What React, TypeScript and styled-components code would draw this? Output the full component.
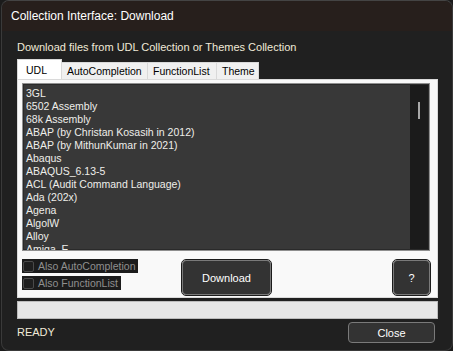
import React from "react";
import styled, { createGlobalStyle } from "styled-components";

const GlobalStyle = createGlobalStyle`
  html, body {
    margin: 0;
    padding: 0;
    background: #1b1b1b;
    font-family: "Liberation Sans", Arial, sans-serif;
  }
`;

const items = [
  "3GL",
  "6502 Assembly",
  "68k Assembly",
  "ABAP (by Christan Kosasih in 2012)",
  "ABAP (by MithunKumar in 2021)",
  "Abaqus",
  "ABAQUS_6.13-5",
  "ACL (Audit Command Language)",
  "Ada (202x)",
  "Agena",
  "AlgolW",
  "Alloy",
  "Amiga_E",
];

const tabs = [
  { label: "UDL", width: 45 },
  { label: "AutoCompletion", width: 87 },
  { label: "FunctionList", width: 70 },
  { label: "Theme", width: 43 },
];

function App() {
  return (
    <>
      <GlobalStyle />
      <Window>
        <TitleBar>Collection Interface: Download</TitleBar>
        <Body>
          <Description>Download files from UDL Collection or Themes Collection</Description>
          <TabRow>
            {tabs.map((t, i) => (
              <Tab key={t.label} active={i === 0} width={t.width}>
                {t.label}
              </Tab>
            ))}
          </TabRow>
          <Panel>
            <ListBox>
              <ListItems>
                {items.map((it) => (
                  <ListItem key={it}>{it}</ListItem>
                ))}
              </ListItems>
              <ScrollTrack>
                <ScrollThumb />
              </ScrollTrack>
            </ListBox>
            <Controls>
              <CheckColumn>
                <CheckRow>
                  <CheckBox />
                  Also AutoCompletion
                </CheckRow>
                <CheckRow>
                  <CheckBox />
                  Also FunctionList
                </CheckRow>
              </CheckColumn>
              <DarkButton width={89}>Download</DarkButton>
              <DarkButton width={37}>?</DarkButton>
            </Controls>
          </Panel>
          <Progress />
          <Footer>
            <Status>READY</Status>
            <CloseButton>Close</CloseButton>
          </Footer>
        </Body>
      </Window>
    </>
  );
}

const Window = styled.div`
  width: 450px;
  height: 349px;
  margin-left: 1px;
  border: 1px solid #3a3a3a;
  border-top-color: #444;
  border-radius: 8px;
  overflow: hidden;
  background: #202020;
  display: flex;
  flex-direction: column;
`;

const TitleBar = styled.div`
  height: 30px;
  flex: none;
  background: #271f1c;
  color: #ffffff;
  font-family: "Liberation Sans", Arial, sans-serif;
  font-size: 12px;
  display: flex;
  align-items: center;
  padding-left: 9px;
`;

const Body = styled.div`
  flex: 1;
  display: flex;
  flex-direction: column;
  padding: 0 15px 0 15px;
`;

const Description = styled.div`
  margin-top: 9px;
  height: 14px;
  line-height: 14px;
  color: #f0ead8;
  font-size: 11px;
`;

const TabRow = styled.div`
  margin-top: 5px;
  height: 20px;
  display: flex;
  align-items: flex-end;
`;

const Tab = styled.div<{ active?: boolean; width: number }>`
  width: ${({ width }) => width}px;
  height: ${({ active }) => (active ? 20 : 17)}px;
  padding-left: ${({ active }) => (active ? 8 : 5)}px;
  padding-top: ${({ active }) => (active ? 4 : 0)}px;
  background: ${({ active }) => (active ? "#ffffff" : "#f0f0f0")};
  border: 1px solid #d9d9d9;
  border-bottom: none;
  margin-left: -1px;
  box-sizing: border-box;
  color: #000;
  font-size: 10.5px;
  display: flex;
  align-items: ${({ active }) => (active ? "flex-start" : "center")};
  &:first-child {
    margin-left: 0;
  }
`;

const Panel = styled.div`
  width: 421px;
  height: 219px;
  background: #f9f9f9;
  border: 1px solid #dadada;
  box-sizing: border-box;
  padding: 3px 7px 0 4px;
  display: flex;
  flex-direction: column;
`;

const ListBox = styled.div`
  height: 168px;
  background: #383838;
  border: 1px solid #8f8f8f;
  box-shadow: inset 0 0 0 1px #2a2a2a;
  box-sizing: border-box;
  display: flex;
  overflow: hidden;
`;

const ListItems = styled.div`
  flex: 1;
  padding: 3px 0 0 3px;
`;

const ListItem = styled.div`
  height: 13px;
  line-height: 13px;
  color: #eeeeea;
  font-size: 10.5px;
  white-space: nowrap;
`;

const ScrollTrack = styled.div`
  width: 18px;
  background: #1b1b1b;
  margin: 1px 1px 1px 0;
  position: relative;
`;

const ScrollThumb = styled.div`
  position: absolute;
  left: 8px;
  top: 17px;
  width: 2px;
  height: 17px;
  background: #a8a8a8;
`;

const Controls = styled.div`
  margin-top: 9px;
  display: flex;
  align-items: flex-start;
`;

const CheckColumn = styled.div`
  width: 160px;
  margin-top: -1px;
  display: flex;
  flex-direction: column;
  gap: 3px;
`;

const CheckRow = styled.div`
  align-self: flex-start;
  height: 14px;
  line-height: 14px;
  background: #1c1c1c;
  color: #8f8f8f;
  font-size: 10.5px;
  display: flex;
  align-items: center;
  gap: 4px;
  padding-right: 3px;
`;

const CheckBox = styled.span`
  width: 11px;
  height: 11px;
  margin-left: 1px;
  border: 1px solid #4a4a4a;
  border-radius: 2px;
  background: #1f1f1f;
  box-sizing: border-box;
`;

const DarkButton = styled.button<{ width: number }>`
  width: ${({ width }) => width}px;
  height: 35px;
  background: #333333;
  color: #ffffff;
  font-family: "Liberation Sans", Arial, sans-serif;
  font-size: 11px;
  border: 1px solid #7a7a7a;
  border-radius: 4px;
  outline: 1px solid #1c1c1c;
  padding: 0;
  &:last-child {
    margin-left: auto;
  }
`;

const Progress = styled.div`
  margin-top: 3px;
  width: 421px;
  height: 18px;
  box-sizing: border-box;
  background: #e6e6e6;
  border: 1px solid #bcbcbc;
`;

const Footer = styled.div`
  margin-top: 3px;
  display: flex;
  align-items: center;
  justify-content: space-between;
  padding-right: 2px;
`;

const Status = styled.div`
  color: #f0ead8;
  font-size: 11px;
  margin-top: -1px;
`;

const CloseButton = styled.button`
  width: 87px;
  height: 21px;
  background: #333333;
  color: #ffffff;
  font-family: "Liberation Sans", Arial, sans-serif;
  font-size: 11px;
  border: 1px solid #7a7a7a;
  border-radius: 4px;
  padding: 0;
`;

export default App;
